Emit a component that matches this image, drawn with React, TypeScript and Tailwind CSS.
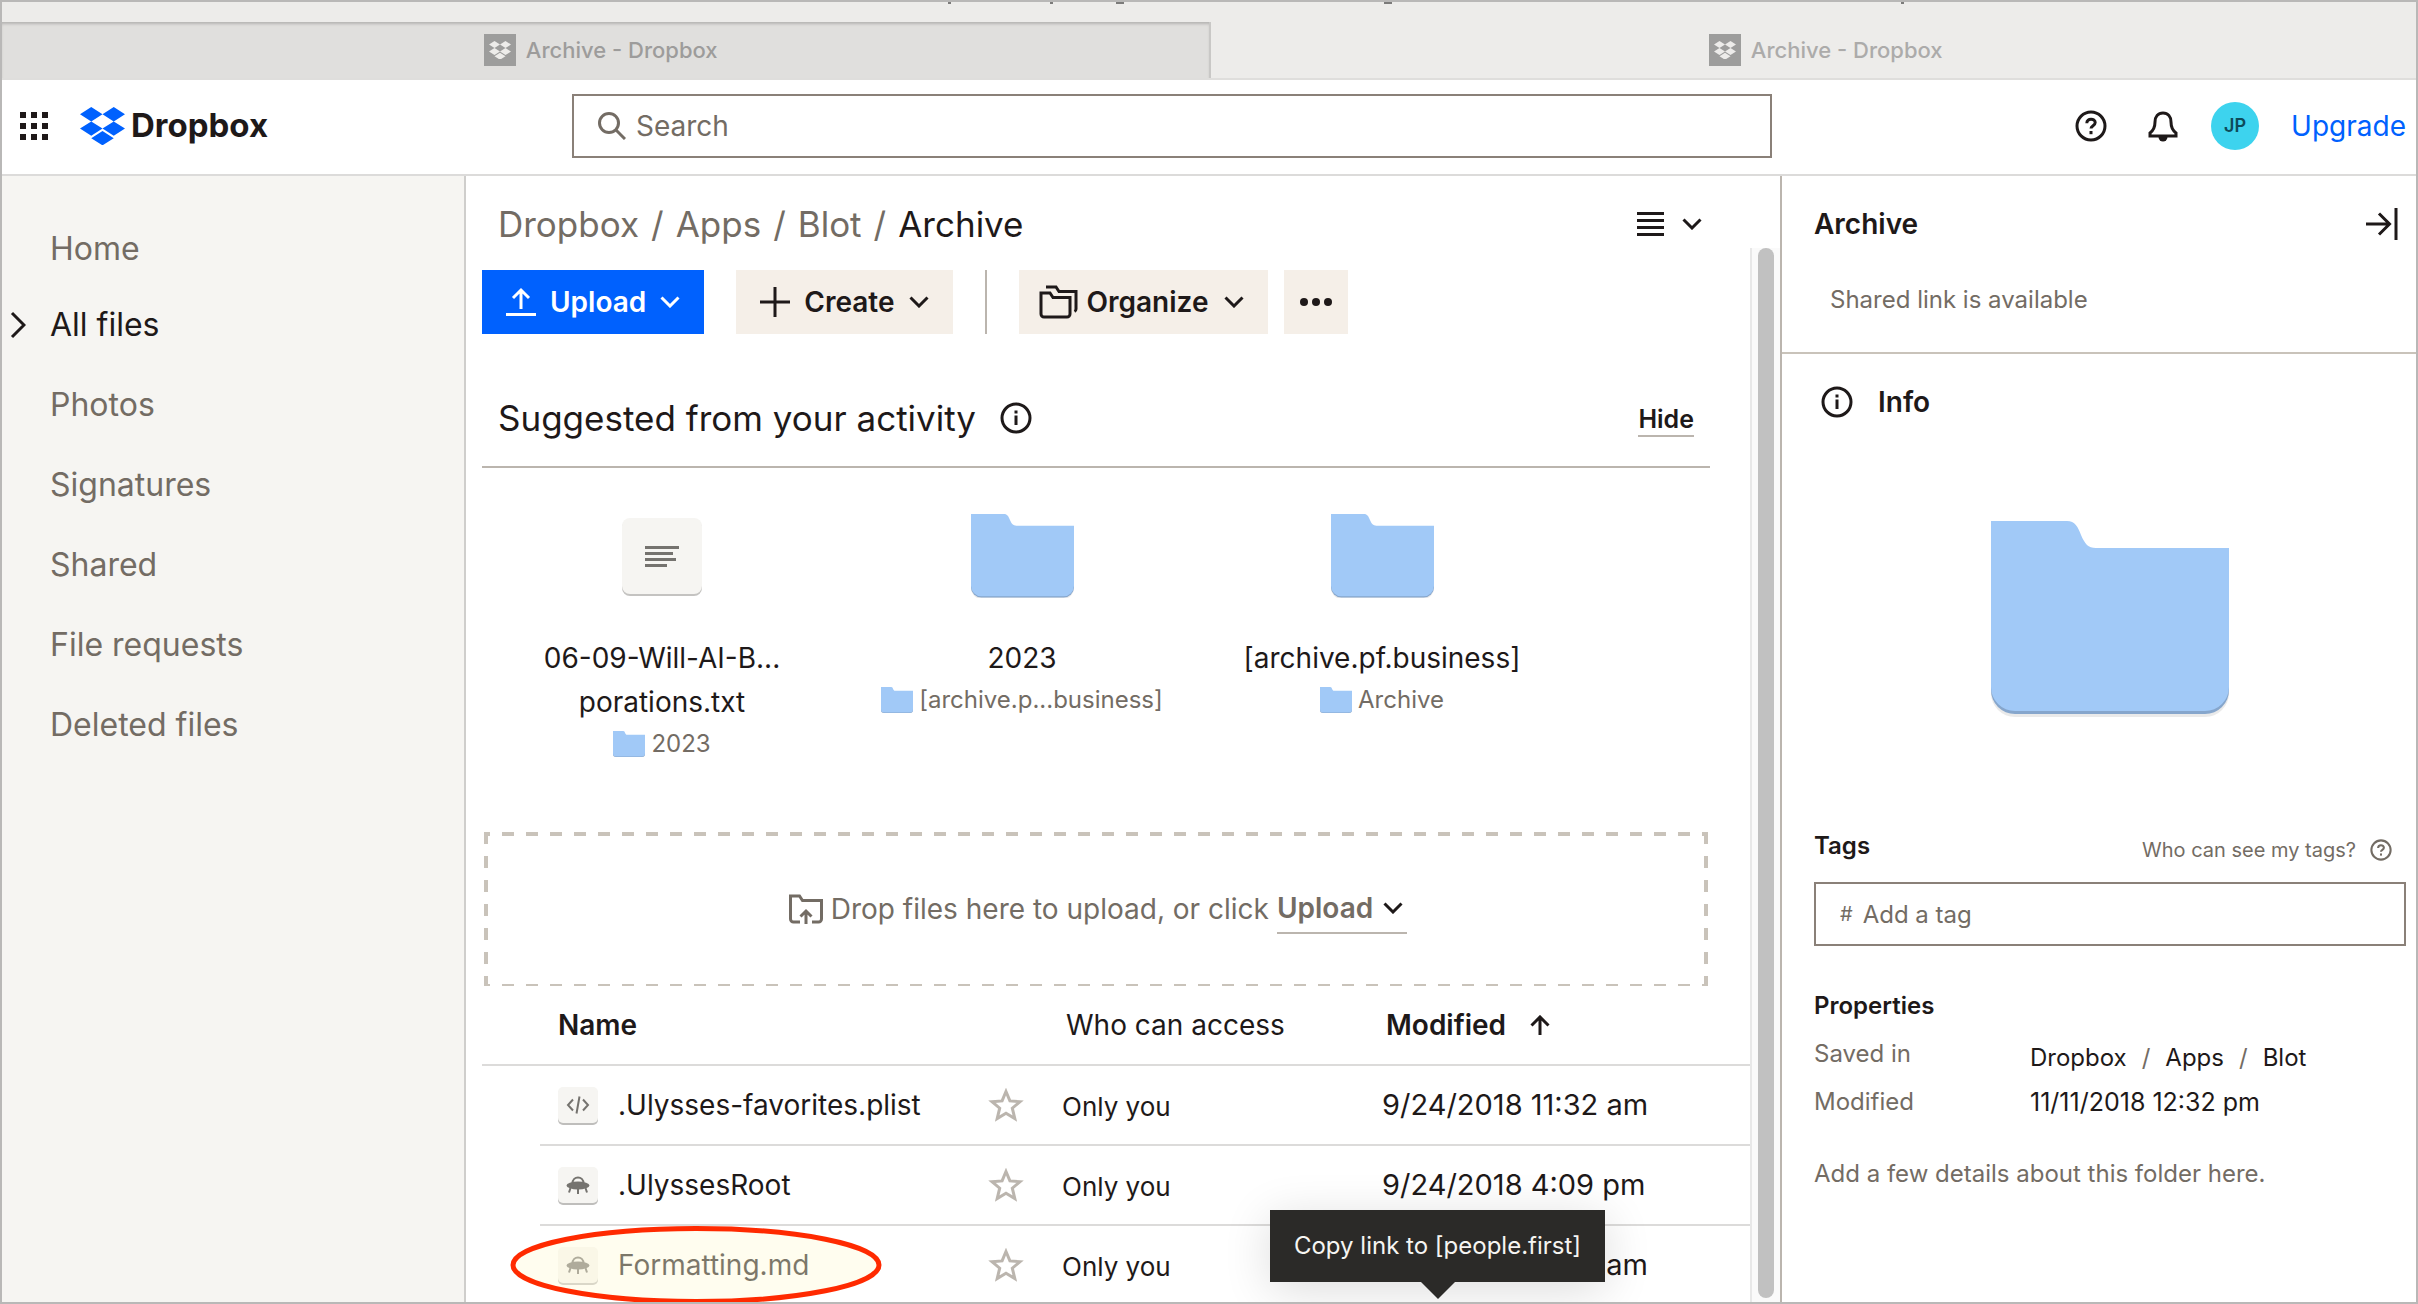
import type { ReactNode } from "react";

interface IconProps {
  className?: string;
}

const NAV_ITEMS = ["Photos", "Signatures", "Shared", "File requests", "Deleted files"];

const SUGGESTIONS = [
  { lines: ["06-09-Will-AI-B...", "porations.txt"], parent: "2023", kind: "text" },
  { lines: ["2023"], parent: "[archive.p...business]", kind: "folder" },
  { lines: ["[archive.pf.business]"], parent: "Archive", kind: "folder" },
];

const FILES = [
  { name: ".Ulysses-favorites.plist", kind: "code", modified: "9/24/2018 11:32 am" },
  { name: ".UlyssesRoot", kind: "unknown", modified: "9/24/2018 4:09 pm" },
  { name: "Formatting.md", kind: "unknown", modified: "am" },
];

function DropboxGlyph({ className }: IconProps) {
  return (
    <svg viewBox="0 0 50 42.6" fill="currentColor" className={className} aria-hidden="true">
      <path d="M12.5 0 25 8 12.5 16 0 8zM37.5 0 50 8 37.5 16 25 8zM0 24l12.5-8L25 24l-12.5 8zM37.5 16 50 24l-12.5 8L25 24zM12.5 34.6l12.5-8 12.5 8-12.5 8z" />
    </svg>
  );
}

function Folder({ className }: IconProps) {
  return (
    <svg viewBox="0 0 238 196" className={className} aria-hidden="true">
      <path d="M0 60H238V172a24 24 0 0 1-24 24H24a24 24 0 0 1-24-24z" fill="#dcdcdc" opacity="0.6" />
      <path d="M0 60H238V169a24 24 0 0 1-24 24H24a24 24 0 0 1-24-24z" fill="#86a6cc" />
      <path
        d="M0 0H76C84 0 87 6 90 14C94 23 97 27 105 27H238V166a24 24 0 0 1-24 24H24a24 24 0 0 1-24-24z"
        fill="#a1c9f7"
      />
    </svg>
  );
}

function Chevron({ className }: IconProps) {
  return (
    <svg viewBox="0 0 20 12" fill="none" stroke="currentColor" strokeWidth="3" className={className} aria-hidden="true">
      <path d="M1.5 1.5 10 10l8.5-8.5" />
    </svg>
  );
}

function InfoIcon() {
  return (
    <svg viewBox="0 0 32 32" fill="none" stroke="currentColor" strokeWidth="3" className="size-8" aria-hidden="true">
      <circle cx="16" cy="16" r="14" />
      <path d="M16 13.5V23" />
      <path d="M16 8.5v3" />
    </svg>
  );
}

function HelpIcon({ className }: IconProps) {
  return (
    <svg viewBox="0 0 32 32" fill="none" stroke="currentColor" strokeWidth="3" className={className} aria-hidden="true">
      <circle cx="16" cy="16" r="14" />
      <path d="M11.8 13.2c0-5.4 8.4-5.2 8.4-.6 0 3.2-4.2 3-4.2 6" />
      <path d="M16 21v3.2" />
    </svg>
  );
}

function Star() {
  return (
    <svg viewBox="0 0 36 34" fill="none" stroke="#bbb5ae" strokeWidth="3" className="h-[34px] w-9" aria-hidden="true">
      <path d="M18 3.5 21.9 12.9 32 13.7 24.3 20.2 26.800 30.500 18 25.2 9.200 30.500 11.7 20.2 4 13.7 14.1 12.9z" />
    </svg>
  );
}

function FileIcon({ kind }: { kind: string }) {
  return (
    <span className="flex h-9 w-10 shrink-0 items-center justify-center rounded-[5px] bg-[#f6f5f2] text-[#75736f] shadow-[0_2px_0_#bfbebc]">
      {kind === "code" ? (
        <svg viewBox="0 0 24 20" fill="none" stroke="currentColor" strokeWidth="2" className="h-5 w-6" aria-hidden="true">
          <path d="M7 4.5 2 10l5 5.5M17 4.5 22 10l-5 5.5M13.5 1.5l-3 17" />
        </svg>
      ) : (
        <svg viewBox="0 0 24 20" className="h-5 w-6" aria-hidden="true">
          <path d="M6.5 8.5C6.5 0.500 17.5 0.500 17.5 8.5" fill="none" stroke="currentColor" strokeWidth="2" />
          <ellipse cx="12" cy="10.5" rx="11.5" ry="4" fill="currentColor" />
          <path d="M4.5 13 3 17.500M12 13v6M19.5 13 21 17.500" stroke="currentColor" strokeWidth="2" />
        </svg>
      )}
    </span>
  );
}

function BrowserTab({ className, children }: { className: string; children: ReactNode }) {
  return (
    <div className={`flex items-center justify-center gap-2.5 text-[22px] font-medium ${className}`}>
      <span className="flex size-8 items-center justify-center bg-[#9d9d9c]">
        <DropboxGlyph className="w-[22px] text-[#edecea]" />
      </span>
      {children}
    </div>
  );
}

function TopBar() {
  return (
    <header className="flex h-24 shrink-0 items-center border-b-2 border-[#dcdbda] pb-0.5">
      <div className="flex w-[570px] items-center pl-[18px]">
        <button type="button" aria-label="Apps">
          <svg viewBox="0 0 28 28" className="size-7" fill="#1e1919" aria-hidden="true">
            {[0, 11, 22].map((y) => [0, 11, 22].map((x) => <rect key={`${x}-${y}`} x={x} y={y} width="6" height="6" />))}
          </svg>
        </button>
        <a href="#home" className="ml-8 flex items-center gap-1.5 text-[33px] font-bold">
          <DropboxGlyph className="w-[45px] text-[#0061fe]" />
          Dropbox
        </a>
      </div>
      <label className="flex h-16 flex-1 items-center gap-2.5 border-2 border-[#8a8078] pl-6 text-[#736c64]">
        <svg viewBox="0 0 28 28" fill="none" stroke="currentColor" strokeWidth="3" className="size-7" aria-hidden="true">
          <circle cx="11" cy="11" r="9.5" />
          <path d="m18 18 9 9" />
        </svg>
        <input
          type="text"
          aria-label="Search"
          placeholder="Search"
          className="h-full flex-1 text-[28px] outline-none placeholder:text-[#736c64]"
        />
      </label>
      <div className="flex w-[644px] items-center justify-end pr-2.5">
        <button type="button" aria-label="Help">
          <HelpIcon className="size-8" />
        </button>
        <button type="button" aria-label="Notifications" className="ml-10">
          <svg viewBox="0 0 32 32" fill="none" className="size-8" aria-hidden="true">
            <path
              d="M3 26v-3c4-3 5-6 5-11 0-5.5 3-9 8-9s8 3.500 8 9c0 5 1 8 5 11v3z"
              stroke="currentColor"
              strokeWidth="3"
            />
            <path d="M11.500 27h9a4.500 4.500 0 0 1-9 0z" fill="currentColor" />
          </svg>
        </button>
        <span className="ml-8 flex size-12 items-center justify-center rounded-full bg-[#3dd3ee] text-lg font-semibold text-[#0e4b5a]">
          JP
        </span>
        <a href="#upgrade" className="ml-8 text-[28px] text-[#0061fe]">
          Upgrade
        </a>
      </div>
    </header>
  );
}

function Sidebar() {
  return (
    <nav className="w-[464px] shrink-0 border-r-2 border-[#cfcecc] bg-[#f6f5f2] pt-[37px] text-[32px] text-[#736c64]">
      <a href="#home" className="flex h-[72px] items-center pl-12">
        Home
      </a>
      <a href="#files" className="flex h-20 items-center text-[#1e1919]">
        <span className="w-12 pl-2">
          <svg viewBox="0 0 16 28" fill="none" stroke="currentColor" strokeWidth="3" className="h-7 w-4" aria-hidden="true">
            <path d="m2 2 12 12L2 26" />
          </svg>
        </span>
        All files
      </a>
      {NAV_ITEMS.map((item) => (
        <a key={item} href="#nav" className="flex h-20 items-center pl-12">
          {item}
        </a>
      ))}
    </nav>
  );
}

function Toolbar() {
  return (
    <div className="flex h-16 items-center text-[28px] font-semibold">
      <button type="button" className="flex h-16 items-center bg-[#0061fe] px-6 text-white">
        <svg viewBox="0 0 30 30" fill="none" stroke="currentColor" strokeWidth="3" className="mr-3.5 size-[30px]" aria-hidden="true">
          <path d="M15 22V3M7 11l8-8 8 8M0 27.500h30" />
        </svg>
        Upload
        <Chevron className="ml-3.5 h-3 w-5" />
      </button>
      <button type="button" className="ml-8 flex h-16 items-center bg-[#f5efe8] px-6">
        <svg viewBox="0 0 30 30" fill="none" stroke="currentColor" strokeWidth="3" className="mr-3.5 size-[30px]" aria-hidden="true">
          <path d="M15 0v30M0 15h30" />
        </svg>
        Create
        <Chevron className="ml-3.5 h-3 w-5" />
      </button>
      <span className="mx-8 h-full w-0.5 bg-[#bbb5ae]" />
      <button type="button" className="flex h-16 items-center bg-[#f5efe8] pr-6 pl-5">
        <svg viewBox="0 0 40 34" fill="none" stroke="currentColor" strokeWidth="3" className="mr-2 h-[34px] w-10" aria-hidden="true">
          <path d="M2 8h9l3 4.500h17V29a3 3 0 0 1-3 3H5a3 3 0 0 1-3-3z" />
          <path d="M7 2h10l3 4.500h17V24c0 1-.5 2-1.500 2.500" />
        </svg>
        Organize
        <Chevron className="ml-4 h-3 w-5" />
      </button>
      <button type="button" aria-label="More" className="ml-4 flex size-16 items-center justify-center bg-[#f5efe8]">
        <svg viewBox="0 0 32 8" fill="currentColor" className="h-2 w-8" aria-hidden="true">
          <circle cx="4" cy="4" r="4" />
          <circle cx="16" cy="4" r="4" />
          <circle cx="28" cy="4" r="4" />
        </svg>
      </button>
    </div>
  );
}

function Suggestions() {
  return (
    <section>
      <div className="mt-9 mr-10 flex h-[98px] items-center border-b-2 border-[#bbb5ae] px-4">
        <h2 className="text-[35px]">Suggested from your activity</h2>
        <span className="ml-6">
          <InfoIcon />
        </span>
        <button type="button" className="mt-1 ml-auto border-b-2 border-[#bbb5ae] text-[25px] leading-8 font-semibold">
          Hide
        </button>
      </div>
      <div className="flex pt-[46px] pb-[68px]">
        {SUGGESTIONS.map((item) => (
          <a key={item.parent} href="#item" className="flex w-[360px] flex-col items-center">
            <span className="flex h-[84px] items-center">
              {item.kind === "text" ? (
                <span className="flex h-[76px] w-20 flex-col justify-center gap-[3px] rounded-lg bg-[#f6f5f2] pl-[23px] shadow-[0_2px_0_#c4c3c1]">
                  <i className="h-[3px] w-[34px] bg-[#75736f]" />
                  <i className="h-[3px] w-7 bg-[#75736f]" />
                  <i className="h-[3px] w-[31px] bg-[#75736f]" />
                  <i className="h-[3px] w-[22px] bg-[#75736f]" />
                </span>
              ) : (
                <Folder className="w-[103px]" />
              )}
            </span>
            <span className="mt-[38px] text-center text-[28px] leading-[44px]">
              {item.lines.map((line) => (
                <span key={line} className="block">
                  {line}
                </span>
              ))}
            </span>
            <span className="flex h-10 items-center gap-1.5 text-[24px] text-[#736c64]">
              <Folder className="w-8" />
              {item.parent}
            </span>
          </a>
        ))}
      </div>
    </section>
  );
}

function DropZone() {
  return (
    <div className="relative mr-[42px] ml-0.5 flex h-[154px] items-center justify-center pl-1 text-[28px] text-[#736c64]">
      <svg className="absolute inset-0 size-full" stroke="#c9c3ba" strokeDasharray="12 12" aria-hidden="true">
        <line x1="0" y1="2" x2="100%" y2="2" strokeWidth="4" strokeDashoffset="6" />
        <line x1="0" y1="100%" x2="100%" y2="100%" strokeWidth="4" strokeDashoffset="6" />
        <line x1="2" y1="0" x2="2" y2="100%" strokeWidth="4" />
        <line x1="100%" y1="0" x2="100%" y2="100%" strokeWidth="8" />
      </svg>
      <svg viewBox="0 0 34 30" fill="none" stroke="currentColor" strokeWidth="3" className="mr-2 h-[30px] w-[34px]" aria-hidden="true">
        <path d="M11 28H4.500a3 3 0 0 1-3-3V2h9l3 4.500h19V25a3 3 0 0 1-3 3H23" />
        <path d="M17 30V18M11.500 22.500 17 17l5.500 5.500" />
      </svg>
      Drop files here to upload, or click
      <button type="button" className="relative ml-2 flex h-[50px] items-center border-b-2 border-[#bbb5ae] pr-1 font-semibold">
        Upload
        <Chevron className="ml-2.5 h-3 w-5 text-[#1e1919]" />
      </button>
    </div>
  );
}

function FileTable() {
  return (
    <table className="w-full table-fixed border-separate border-spacing-0 text-[28px]">
      <thead>
        <tr className="text-left [&>th]:h-20 [&>th]:border-b-2 [&>th]:border-[#dcdbda]">
          <th className="w-[58px]" aria-label="Select" />
          <th className="w-[448px] pl-[18px] font-semibold">Name</th>
          <th className="w-[74px]" aria-label="Starred" />
          <th className="w-80 pl-1 font-normal">Who can access</th>
          <th className="pl-1 font-semibold">
            <span className="flex items-center gap-6">
              Modified
              <svg viewBox="0 0 20 20" fill="none" stroke="currentColor" strokeWidth="3" className="size-5" aria-hidden="true">
                <path d="M10 20V2.500M1.500 10.500 10 2l8.500 8.500" />
              </svg>
            </span>
          </th>
        </tr>
      </thead>
      <tbody>
        {FILES.map((file, index) => {
          const isMarked = index === 2;
          return (
            <tr key={file.name} className="[&>td+td]:border-b-2 [&>td+td]:border-[#dcdbda] [&>td]:h-20">
              <td />
              <td className="relative pl-[18px]">
                <a href="#file" className="flex items-center gap-5">
                  <FileIcon kind={file.kind} />
                  {file.name}
                </a>
                {isMarked && (
                  <svg viewBox="0 0 372 78" className="absolute top-0 -left-[30px] h-[78px] w-[372px]" aria-hidden="true">
                    <ellipse cx="186" cy="39" rx="183" ry="36.500" fill="#fffbda" fillOpacity="0.42" />
                    <ellipse cx="186" cy="39" rx="183" ry="36.500" fill="none" stroke="#ff2a00" strokeWidth="5" />
                  </svg>
                )}
              </td>
              <td>
                <button type="button" aria-label={`Star ${file.name}`} className="flex">
                  <Star />
                </button>
              </td>
              <td className="pt-0.5 text-[26px]">Only you</td>
              <td className="relative text-[29px]">
                <span className={`block w-[266px] whitespace-nowrap ${isMarked ? "text-right" : ""}`}>{file.modified}</span>
                {isMarked && (
                  <div
                    role="tooltip"
                    className="absolute -top-4 -left-28 flex h-[72px] w-[335px] items-center justify-center bg-[#2b2a28] text-2xl text-[#f6f5f2] shadow-[0_8px_48px_rgba(0,0,0,0.14)]"
                  >
                    Copy link to [people.first]
                    <svg viewBox="0 0 34 17" className="absolute top-full left-1/2 w-[34px] -translate-x-1/2" fill="#2b2a28" aria-hidden="true">
                      <path d="M0 0h34L17 17z" />
                    </svg>
                  </div>
                )}
              </td>
            </tr>
          );
        })}
      </tbody>
    </table>
  );
}

function DetailsPanel() {
  return (
    <aside className="w-[634px] shrink-0 text-[24px] text-[#736c64]">
      <div className="mt-6 flex h-12 items-center justify-between pr-[18px] pl-8 text-[#1e1919]">
        <h2 className="text-[28px] font-semibold">Archive</h2>
        <button type="button" aria-label="Close details">
          <svg viewBox="0 0 32 32" fill="none" stroke="currentColor" strokeWidth="3" className="size-8" aria-hidden="true">
            <path d="M30 0v32M0 16h23M13 5.500 23.500 16 13 26.500" />
          </svg>
        </button>
      </div>
      <p className="flex h-[106px] items-center border-b-2 border-[#c9c3ba] pl-12">Shared link is available</p>
      <h3 className="flex h-24 items-center gap-[25px] pl-[39px] text-[28px] font-semibold text-[#1e1919]">
        <InfoIcon />
        Info
      </h3>
      <div className="pr-[10px] pl-8">
        <Folder className="mx-auto mt-[71px] w-[238px]" />
        <div className="mt-[92px] flex h-[73px] items-center justify-between pr-[14px]">
          <label htmlFor="tag" className="font-semibold text-[#1e1919]">
            Tags
          </label>
          <a href="#tags" className="flex items-center gap-3.5 pt-2 text-xl">
            Who can see my tags?
            <HelpIcon className="size-[22px]" />
          </a>
        </div>
        <div className="flex h-16 items-center gap-2.5 border-2 border-[#8a8078] pl-6">
          <span className="text-xl">#</span>
          <input id="tag" type="text" placeholder="Add a tag" className="h-full flex-1 outline-none placeholder:text-[#736c64]" />
        </div>
        <h3 className="mt-10 leading-10 font-semibold text-[#1e1919]">Properties</h3>
        <dl className="mt-1 grid grid-cols-[216px_1fr] leading-[48px]">
          <dt>Saved in</dt>
          <dd className="flex gap-[15px] pt-2 leading-10 text-[#1e1919]">
            <a href="#dropbox">Dropbox</a>
            <span className="text-[#736c64]">/</span>
            <a href="#apps">Apps</a>
            <span className="text-[#736c64]">/</span>
            <a href="#blot">Blot</a>
          </dd>
          <dt>Modified</dt>
          <dd className="text-[25px] text-[#1e1919]">11/11/2018 12:32 pm</dd>
        </dl>
        <p className="mt-7 leading-10">Add a few details about this folder here.</p>
      </div>
    </aside>
  );
}

export default function App() {
  return (
    <div className="flex h-screen flex-col overflow-hidden border-2 border-[#b9b8b7] bg-white font-['Inter',sans-serif] text-[#1e1919]">
      <div className="h-5 shrink-0 bg-[#edecea]">
        {/* bottom edge of the address text */}
        <svg className="block h-0.5 w-full" fill="#7c7b7a" aria-hidden="true">
          <rect x="946" width="3" height="2" />
          <rect x="1048" width="3" height="2" />
          <rect x="1114" width="8" height="2" />
          <rect x="1382" width="8" height="2" />
          <rect x="1899" width="3" height="2" />
        </svg>
      </div>
      <div className="flex h-[58px] shrink-0 border-b-2 border-[#dfdedc]">
        <BrowserTab className="w-[50.1%] border-r-2 border-[#c9c8c6] bg-[#e0dfdd] pr-2.5 text-[#9d9c9b] shadow-[inset_0_3px_3px_-1px_#b5b4b2]">
          Archive - Dropbox
        </BrowserTab>
        <BrowserTab className="flex-1 bg-[#edecea] pl-6 text-[#acabaa]">Archive - Dropbox</BrowserTab>
      </div>
      <TopBar />
      <div className="flex min-h-0 flex-1">
        <Sidebar />
        <main className="flex min-w-0 flex-1 flex-col border-r-2 border-[#bbb5ae]">
          <div className="mt-6 flex h-12 shrink-0 items-center justify-between pr-[78px] pl-8">
            <nav className="flex gap-3 text-[35px] text-[#736c64]">
              <a href="#dropbox">Dropbox</a>
              <span>/</span>
              <a href="#apps">Apps</a>
              <span>/</span>
              <a href="#blot">Blot</a>
              <span>/</span>
              <span className="text-[#1e1919]">Archive</span>
            </nav>
            <button type="button" aria-label="Change view" className="flex items-center gap-[18px]">
              <svg viewBox="0 0 27 24" stroke="currentColor" strokeWidth="3" className="h-6 w-[27px]" aria-hidden="true">
                <path d="M0 1.500h27M0 8.500h27M0 15.500h27M0 22.500h27" />
              </svg>
              <Chevron className="h-3 w-5" />
            </button>
          </div>
          <div className="flex min-h-0 flex-1">
            <div className="min-w-0 flex-1 overflow-hidden pt-[22px] pl-4">
              <Toolbar />
              <Suggestions />
              <DropZone />
              <FileTable />
            </div>
            <div className="w-[30px] shrink-0 border-l-2 border-[#e8e8e8] bg-[#fafafa] pb-1 pl-1.5">
              <div className="h-full w-4 rounded-full bg-[#c1c1c1]" />
            </div>
          </div>
        </main>
        <DetailsPanel />
      </div>
    </div>
  );
}
